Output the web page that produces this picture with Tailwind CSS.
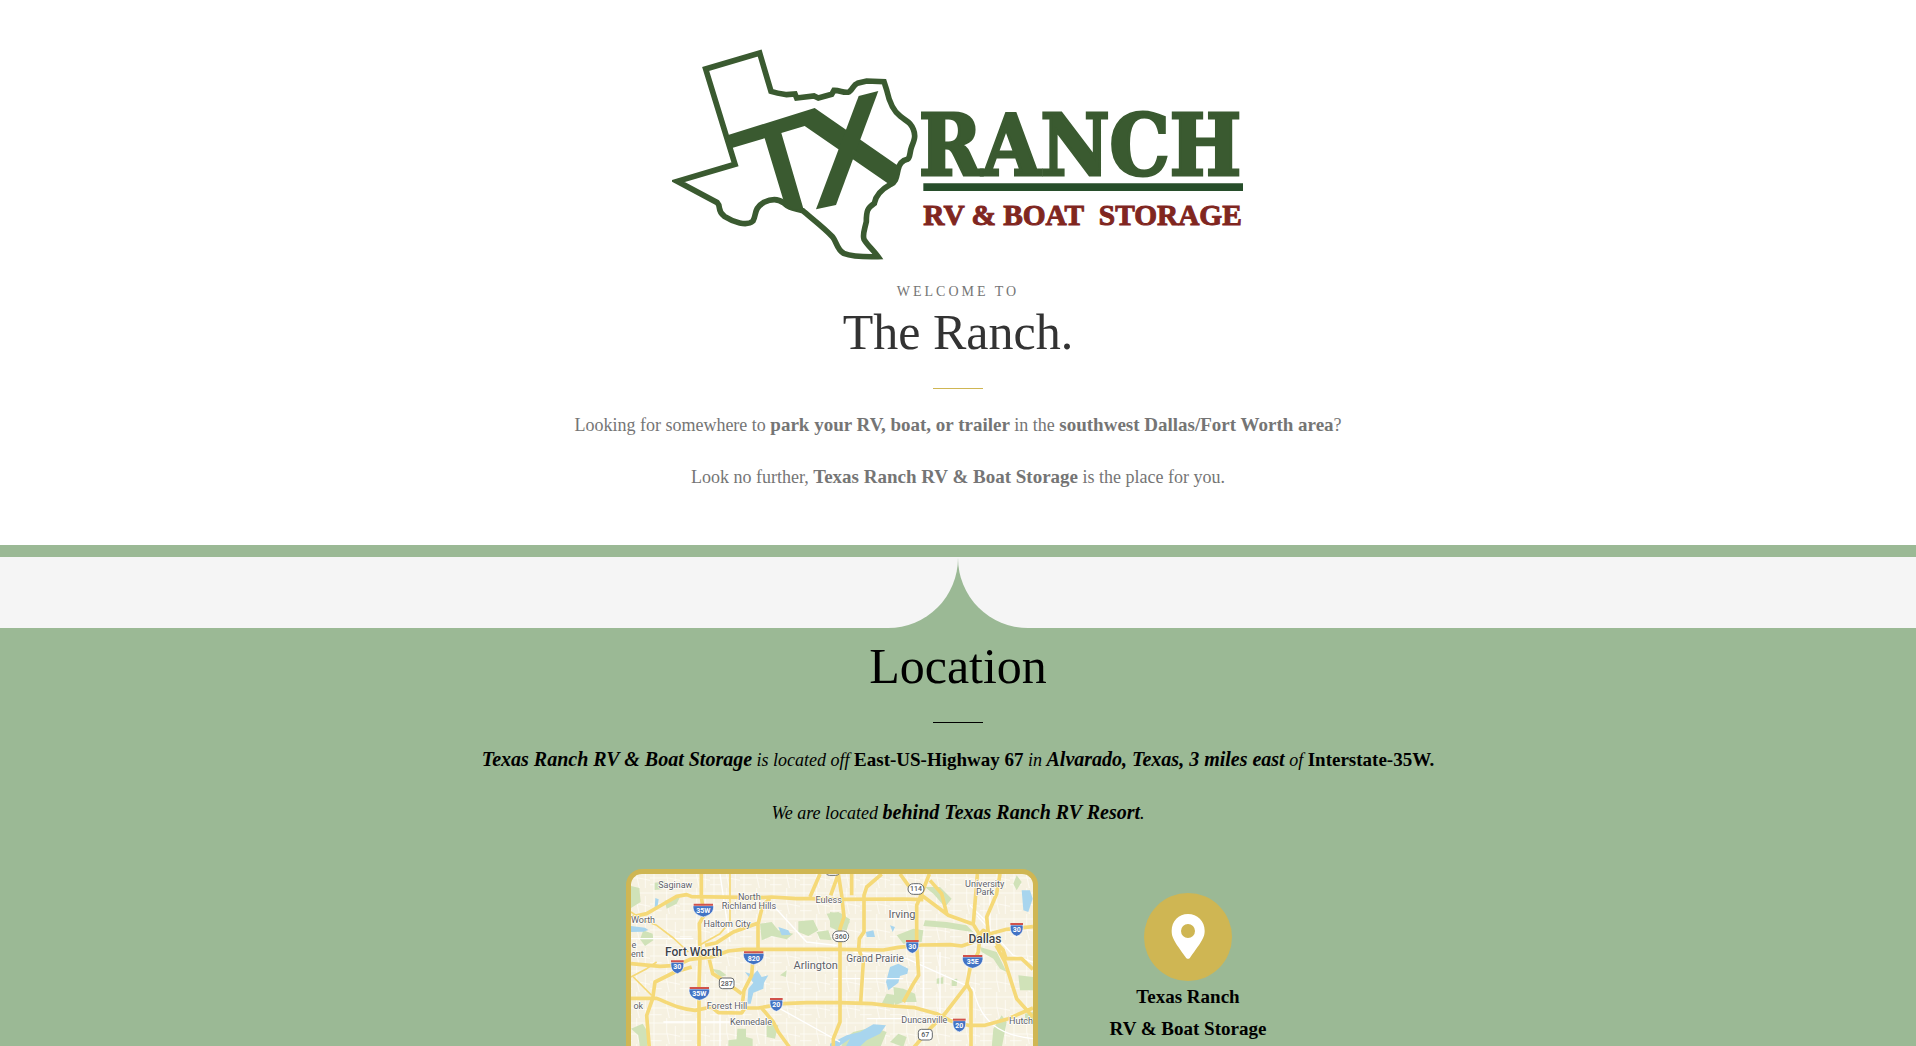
<!DOCTYPE html>
<html lang="en">
<head>
<meta charset="utf-8">
<meta name="viewport" content="width=device-width, initial-scale=1">
<title>Texas Ranch RV &amp; Boat Storage</title>
<script src="https://cdn.jsdelivr.net/npm/@tailwindcss/browser@4"></script>
</head>
<body class="bg-white font-['Liberation_Serif',serif] text-lg text-center overflow-x-hidden">
<header class="flex flex-col items-center pt-12 pb-[55px] px-4 text-[#757575]">
  <!-- logo -->
  <svg class="w-[572px] h-[216px] max-w-full" viewBox="36 24 1716 648" role="img" aria-label="TX Ranch RV &amp; Boat Storage">
    <g fill="none" stroke="#3a5a30" stroke-width="17" stroke-linejoin="miter">
      <path d="M225 373L137 87L299 39L333 154C352 160 360 161 380 164L405 162L410 174L462 168L475 174L515 163L522 151C540 150 555 162 568 155C580 147 580 134 592 130L620 123L672 125L680 150C688 187 700 213 721 229C744 247 750 245 760 268C768 288 763 300 755 320C748 338 752 352 742 358C724 362 717 374 714 390C709 412 709 425 692 433C665 448 647 467 643 490C622 504 619 513 619 545C612 575 607 584 612 598C623 617 640 630 654 650C615 651 572 648 551 640C530 628 531 607 518 591C492 563 456 536 428 512C398 504 390 506 370 488C352 474 330 478 312 487C280 505 290 525 279 543C260 560 220 546 193 529C170 511 184 500 172 488L52 424Z"/>
    </g>
    <g fill="#3a5a30">
      <path d="M202 286L464 204L716 379L710 410L695 438L434 258L364 279L432 512L398 508L370 480L314 295L206 327Z"/>
      <path d="M596 168L655 153L528 495L468 508Z"/>
    </g>
    <text x="777" y="406" font-family="'DejaVu Serif Condensed','DejaVu Serif',serif" font-stretch="condensed" font-weight="700" font-size="252" fill="#3a5a30" stroke="#3a5a30" stroke-width="9">RANCH</text>
    <path d="M790 430H1749V453H790Z" fill="#274e2b"/>
    <text x="790" y="556" font-family="'Liberation Serif',serif" font-weight="700" font-size="88" fill="#80261f" stroke="#80261f" stroke-width="3">RV &amp; BOAT&#160; STORAGE</text>
  </svg>
  <p class="mt-4 text-sm leading-6 tracking-[3px]">WELCOME TO</p>
  <h1 class="text-[50px] leading-14 text-[#333]">The Ranch.</h1>
  <hr class="mt-7 w-[50px] border-[#cfb653]">
  <p class="mt-[23px] leading-[26px]">Looking for somewhere to <b class="text-[19px]">park your RV, boat, or trailer</b> in the <b class="text-[19px]">southwest Dallas/Fort Worth area</b>?</p>
  <p class="mt-[26px] leading-[26px]">Look no further, <b class="text-[19px]">Texas Ranch RV &amp; Boat Storage</b> is the place for you.</p>
</header>
<main class="bg-[#9bb995] pt-3 text-black">
  <div class="flex h-[71px]" aria-hidden="true">
    <div class="flex-1 bg-[#f5f5f5] rounded-br-[70px]"></div>
    <div class="flex-1 bg-[#f5f5f5] rounded-bl-[70px]"></div>
  </div>
  <section class="flex flex-col items-center px-4 pt-[10px] pb-16">
    <h2 class="text-[50px] leading-14">Location</h2>
    <hr class="mt-7 w-[50px] border-black">
    <p class="mt-[23px] leading-[26px] italic"><b class="text-xl leading-[26px]">Texas Ranch RV &amp; Boat Storage</b> is located off <b class="not-italic text-[19px]">East-US-Highway 67</b> in <b class="text-xl leading-[26px]">Alvarado, Texas, 3 miles east</b> of <b class="not-italic text-[19px]">Interstate-35W.</b></p>
    <p class="mt-[26px] leading-[26px] italic">We are located <b class="text-xl leading-[26px]">behind Texas Ranch RV Resort</b>.</p>
    <div class="mt-[43px] flex justify-center items-start gap-12">
      <!-- area map -->
      <svg class="w-[412px] h-[310px] shrink-0 rounded-2xl border-5 border-[#cfb653] bg-[#f6f1e1]" viewBox="33 36 1206 900" role="img" aria-label="Map of Fort Worth and Dallas">
        <defs>
          <pattern id="streets" width="90" height="78" patternUnits="userSpaceOnUse">
            <path d="M12 0V78M50 0V42L58 78M76 24V78M0 15H90M0 48H56L90 55M0 68H35" fill="none" stroke="#fffefa" stroke-width="3" stroke-opacity=".7"/>
          </pattern>
          <g id="interstate">
            <path d="M-19-12H19C21 8 14 17 0 22C-14 17-21 8-19-12Z" fill="#4273c4" stroke="#fff" stroke-width="2"/>
            <path d="M-19-18H19V-12H-19Z" fill="#d0524b"/>
          </g>
          <g id="interstate-wide">
            <path d="M-31-12H31C32 8 20 17 0 22C-20 17-32 8-31-12Z" fill="#4273c4" stroke="#fff" stroke-width="2"/>
            <path d="M-29-18H29V-12H-29Z" fill="#d0524b"/>
          </g>
        </defs>
        <path d="M33 36H1239V936H33Z" fill="url(#streets)"/>
        <g fill="#d0e2b8">
          <path d="M33 72L58 78L62 120L33 138ZM70 205L98 215L100 235L75 252L60 232ZM104 62L135 58L125 82L104 84ZM134 116L180 105L170 125L140 140Z"/>
          <path d="M420 185L455 180L475 205L520 215L500 232L455 222L425 235ZM535 178L580 174L595 205L565 222L535 210ZM620 155L655 150L690 172L680 205L640 198ZM590 210L625 205L635 235L600 232Z"/>
          <path d="M352 500L378 500L378 525L398 530L398 558H325V535L350 532ZM440 485L475 490L465 530L440 525ZM33 500L68 485L90 520L80 558H60L55 520Z"/>
          <path d="M630 150L665 155L690 180L660 210L630 195ZM915 175L980 180L1040 190L1060 210L1020 205L980 198L910 192ZM830 220L880 200L910 205L905 240L850 245ZM915 75L960 75L995 110L975 135L940 95Z"/>
          <path d="M820 375L850 380L885 395L890 420L850 420L825 430ZM800 395L830 400L820 435L785 425ZM700 510L760 495L800 510L780 558H660L680 525ZM835 515L860 525L850 555L810 540ZM1080 255L1130 270L1160 330L1140 320L1120 290L1085 270ZM1195 340L1239 345V385L1200 385ZM1120 500L1145 460L1160 480L1145 558H1115ZM1215 455L1239 450V490L1215 480ZM1180 65L1190 40L1205 60L1190 85Z"/>
          <path d="M950 350L970 345V365H950ZM995 352L1012 350L1010 372H995ZM275 320L300 325L320 340L300 345ZM480 340L500 325L498 345Z"/>
        </g>
        <g fill="#a8d5ee">
          <path d="M33 192L75 197L85 204L70 209L33 210ZM106 108L116 112L113 132L104 136ZM475 195L505 205L512 218L485 220ZM375 330L400 338L412 325L425 345L445 340L432 362L430 380L400 392L392 425L382 425L385 380L400 362Z"/>
          <path d="M810 315L835 305L865 320L862 335L840 342L835 362L805 385L798 360ZM630 545L680 520L720 510L760 487L798 490L780 515L740 535L715 558H675L690 530L650 558H630ZM1205 85L1230 85L1238 110L1225 150L1210 145ZM738 210L760 205L765 225L740 225ZM810 190L825 195L818 210Z"/>
        </g>
        <g fill="none" stroke="#fff" stroke-width="4">
          <path d="M33 230H220M300 36L330 240M450 120L560 240L650 250M130 480H370M480 440L660 540M300 558V450M700 270L860 290L1060 380M740 470H1000M910 260V450M960 270V470M1070 160L1180 280L1239 300M1050 130L1110 190M1110 100V240M1060 380C1080 480 1140 520 1239 530M640 350H850"/>
        </g>
        <g fill="none" stroke="#f5d978" stroke-width="11" stroke-linejoin="round">
          <path d="M33 150L70 175L110 190L160 228L205 270M238 250L300 215L330 180V36M33 345L80 320L110 300M40 345L95 400" stroke-width="5"/>
          <path d="M244 36V105L252 160L238 185L240 285L237 370V600M33 165L80 155L120 132L170 103L200 98L215 104L420 107L455 105L530 110L570 110L660 112L850 111L910 113M33 305L120 313L170 310L210 292L275 285L325 267L370 262H660L790 264L835 256L905 249L990 248L1025 252L1055 242L1090 205L1110 215L1160 202L1239 194"/>
          <path d="M255 250L290 242L340 210L415 183L428 130L450 110M414 183V262L400 275L395 340L372 385L366 435M33 409H110C150 425 175 440 225 445L275 435L295 452L365 453L375 438H415L490 425L560 422H660L755 425L815 432L885 437L950 455L995 478L1045 490L1095 490L1165 470L1239 438M215 315L165 330L105 360L98 410L80 460L88 558L82 936M268 293L278 335L310 355L365 395M425 438L460 480L475 510L510 558M570 105L600 36"/>
          <path d="M632 100L655 36L665 100L672 165L660 200V480L640 530V600M785 36L740 75L732 100V210L718 230L716 260L730 300L722 420M695 36V100M928 36L905 95L890 130V250L896 340L880 365L850 420M840 36L865 70L905 100L985 160L1060 187L1080 220L1075 270L1050 320L1040 370L975 455L930 500L880 558M930 55L965 95L980 155M1072 36L1060 185M1140 36L1130 95L1100 165L1105 215L1150 265L1158 290L1205 290L1239 322M1040 365L1053 390V600M1128 250L1155 300L1190 410L1239 465"/>
        </g>
        <g text-anchor="middle" font-family="Roboto,sans-serif" fill="#5e6165" stroke="#fff" stroke-width="4" stroke-linejoin="round" paint-order="stroke">
          <g font-size="27">
            <text x="166" y="77">Saginaw</text><text x="388" y="113">North</text><text x="387" y="141">Richland Hills</text>
            <text x="321" y="194">Haltom City</text><text x="626" y="122">Euless</text><text x="69" y="184">Worth</text>
            <text x="42" y="257">e</text><text x="52" y="284">ent</text><text x="55" y="440">ok</text>
            <text x="321" y="442">Forest Hill</text><text x="393" y="490">Kennedale</text><text x="1094" y="74">University</text>
            <text x="1095" y="100">Park</text><text x="913" y="482">Duncanville</text><text x="1203" y="486">Hutch</text>
          </g>
          <g font-size="30"><text x="765" y="300">Grand Prairie</text></g>
          <g font-size="33"><text x="587" y="321">Arlington</text><text x="846" y="168">Irving</text></g>
          <g font-size="36" font-weight="500" fill="#404347"><text x="221" y="283">Fort Worth</text><text x="1095" y="243">Dallas</text></g>
        </g>
        <use href="#interstate-wide" x="250" y="143"/><use href="#interstate-wide" x="238" y="393"/><use href="#interstate" x="172" y="313"/>
        <use href="#interstate-wide" x="401" y="286"/><use href="#interstate" x="469" y="426"/><use href="#interstate" x="877" y="252"/>
        <use href="#interstate" x="1190" y="201"/><use href="#interstate-wide" x="1058" y="297"/><use href="#interstate" x="1018" y="488"/>
        <g fill="#fff" stroke="#66696c" stroke-width="3">
          <rect x="638" y="207" width="48" height="32" rx="16"/><rect x="864" y="65" width="48" height="32" rx="16"/><rect x="615" y="12" width="46" height="28" rx="14"/>
          <rect x="298" y="348" width="44" height="32" rx="9"/><rect x="895" y="502" width="42" height="32" rx="9"/>
        </g>
        <g text-anchor="middle" font-family="Roboto,sans-serif" font-size="21" font-weight="700" fill="#fff">
          <text x="250" y="153">35W</text><text x="238" y="403">35W</text><text x="172" y="322">30</text><text x="401" y="296">820</text><text x="469" y="435">20</text>
          <text x="877" y="261">30</text><text x="1190" y="210">30</text><text x="1058" y="307">35E</text><text x="1018" y="497">20</text>
          <g fill="#55585c" font-weight="500"><text x="662" y="231">360</text><text x="888" y="88">114</text><text x="320" y="372">287</text><text x="916" y="526">67</text></g>
        </g>
      </svg>
      <div class="w-[204px] pt-6 flex flex-col items-center text-[19px] font-bold leading-8">
        <svg class="size-[88px]" viewBox="0 0 264 264" aria-hidden="true">
          <circle cx="132" cy="132" r="132" fill="#cfb653"/>
          <path fill="#fff" fill-rule="evenodd" d="M132 63C104 63 83 85 83 113C83 134 91 145 126 194Q132 201 138 194C173 145 182 134 182 113C182 85 160 63 132 63ZM132 93A21 21 0 1 1 132 135A21 21 0 1 1 132 93Z"/>
        </svg>
        <p>Texas Ranch</p>
        <p>RV &amp; Boat Storage</p>
      </div>
    </div>
  </section>
</main>
</body>
</html>
